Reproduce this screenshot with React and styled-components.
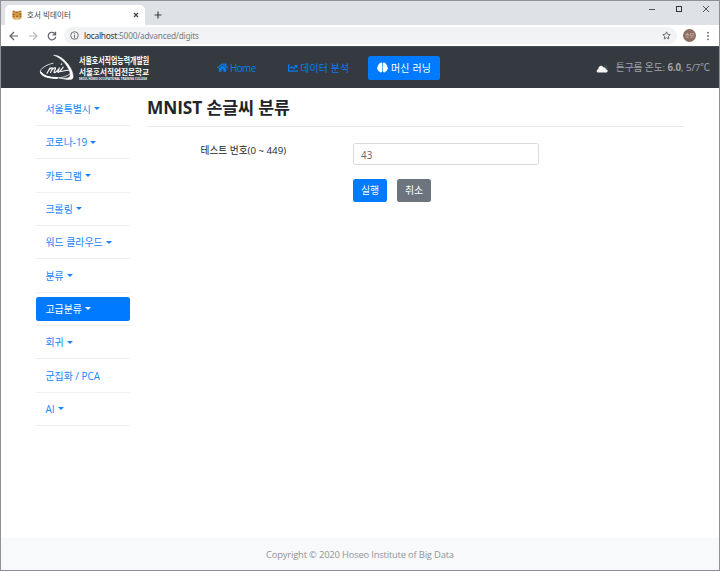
import React from "react";
import styled, { createGlobalStyle, css } from "styled-components";
import { FaHome, FaChartLine, FaBrain } from "react-icons/fa";

const GlobalStyle = createGlobalStyle`
  * { box-sizing: border-box; }
  body {
    margin: 0;
    overflow: hidden;
    font-family: "Open Sans", "Noto Sans CJK KR", sans-serif;
    font-size: 9.9px;
    color: #212529;
  }
`;

const Window = styled.div`
  width: 720px;
  height: 571px;
  display: flex;
  flex-direction: column;
  background: #fff;
  border: 1px solid #8f9195;
  border-bottom-color: #8a8c8f;
`;

const TabBar = styled.div`
  height: 24px;
  flex: none;
  display: flex;
  background: #dee1e6;
  padding-left: 4px;
`;

const Tab = styled.div`
  width: 140px;
  height: 20px;
  margin-top: 4px;
  padding: 0 6px 0 7px;
  display: flex;
  align-items: center;
  background: #fff;
  border-radius: 5px 5px 0 0;
  font-size: 7.5px;
  color: #3c4043;
`;

const TabTitle = styled.span`
  flex: 1;
  margin: -2px 0 0 5px;
  letter-spacing: 0.1px;
  white-space: nowrap;
`;

const NewTab = styled.div`
  width: 26px;
  display: flex;
  align-items: center;
  justify-content: center;
  padding-top: 4px;
`;

const WindowButtons = styled.div`
  margin-left: auto;
  display: flex;
  gap: 19px;
  padding: 4px 9px 0 0;
  height: 12px;
`;

const AddressRow = styled.div`
  height: 21px;
  flex: none;
  display: flex;
  align-items: center;
  padding: 0 9px 0 8px;
  background: #fff;
`;

const BrowserButtons = styled.div`
  width: 55px;
  display: flex;
  gap: 9px;
`;

const AddressBar = styled.div`
  height: 17px;
  flex: 1;
  display: flex;
  align-items: center;
  padding: 0 6px;
  margin-right: 2px;
  border-radius: 9px;
  background: #f1f3f4;
  font-family: "Noto Sans", sans-serif;
  font-size: 8.3px;
  letter-spacing: -0.22px;
  color: #777b7f;
`;

const Url = styled.span`
  flex: 1;
  margin-left: 5px;
`;

const Host = styled.span`
  color: #303336;
`;

const Avatar = styled.div`
  width: 13px;
  height: 13px;
  margin: 0 10px 0 4px;
  border-radius: 50%;
  background: #8d6e63;
  color: #e8dcd8;
  display: flex;
  align-items: center;
  justify-content: center;
  font-size: 5px;
  line-height: 1;
`;

const NavBar = styled.nav`
  height: 42px;
  flex: none;
  display: flex;
  align-items: center;
  padding: 0 9px 0 38px;
  background: #343a40;
  border-top: 1px solid #4b5055;
`;

const Brand = styled.div`
  width: 168.5px;
  display: flex;
  align-items: center;
  gap: 4px;
  color: #fff;
`;

const BrandText = styled.div`
  width: 72px;
  height: 27px;
  margin-top: 2px;
  display: grid;
  grid-template-rows: 11.5px 9.5px 6px;
  white-space: nowrap;
  font-weight: 700;
`;

const BrandLine = styled.span`
  width: max-content;
  height: ${(p) => p.$height}px;
  font-size: ${(p) => p.$size}px;
  line-height: ${(p) => p.$height}px;
  transform: scaleX(${(p) => p.$condense});
  transform-origin: left;
`;

const NavLink = styled.a`
  height: 24px;
  display: flex;
  align-items: center;
  gap: 2.5px;
  padding: 0 9px;
  margin-right: ${(p) => p.$after || 0}px;
  border-radius: 2.5px;
  white-space: nowrap;
  letter-spacing: ${(p) => p.$spacing || 0}px;
  color: ${(p) => (p.$active ? "#fff" : "#087af4")};
  background: ${(p) => (p.$active ? "#007bff" : "transparent")};
`;

const Weather = styled.div`
  margin-left: auto;
  display: flex;
  align-items: center;
  gap: 6.5px;
  color: #a0a3a6;
  white-space: nowrap;
  font-size: 9.8px;
  letter-spacing: -0.13px;
`;

const WeatherText = styled.span`
  margin-top: -2px;
`;

const Body = styled.div`
  flex: 1;
  display: flex;
  padding: 0 35px;
`;

const Sidebar = styled.ul`
  width: 94px;
  margin: 4.6px 17px 0 0;
  padding: 0;
  list-style: none;
`;

const SideItem = styled.li`
  height: 33.33px;
  padding: 4.7px 0;
  border-bottom: 1px solid #efefef;
`;

const SideLink = styled.a`
  height: 23.3px;
  display: flex;
  align-items: center;
  gap: 3px;
  padding-left: 9.5px;
  border-radius: 2.5px;
  white-space: nowrap;
  ${(p) =>
    p.$active
      ? css`
          background: #007bff;
          color: #fff;
        `
      : css`
          color: #1684fb;
        `}
`;

const Caret = styled.i`
  border: 3px solid transparent;
  border-top-color: currentColor;
  border-bottom: 0;
`;

const Content = styled.main`
  flex: 1;
`;

const Title = styled.h3`
  height: 39px;
  margin: 0;
  border-bottom: 1px solid #e8e8e8;
  font-size: 17.3px;
  font-weight: 700;
  letter-spacing: -0.1px;
  line-height: 39px;
  white-space: nowrap;
`;

const Form = styled.form`
  display: grid;
  grid-template-columns: 152.5px 186px;
  row-gap: 14px;
  padding: 16px 0 0 53.5px;
`;

const Label = styled.label`
  padding-top: 1px;
  line-height: 14px;
  font-size: 9.7px;
  white-space: nowrap;
`;

const Input = styled.input`
  width: 186px;
  height: 22.3px;
  padding: 1px 7px 0;
  border: 1px solid #d8dce0;
  border-radius: 2.5px;
  outline: none;
  color: #5f666d;
  font: inherit;
`;

const Actions = styled.div`
  grid-column: 2;
  display: flex;
  gap: 10px;
`;

const Button = styled.button`
  width: 34px;
  height: 22.3px;
  padding: 0;
  border: 0;
  border-radius: 2.5px;
  color: #fff;
  font: inherit;
  background: ${(p) => (p.$primary ? "#007bff" : "#6c757d")};
`;

const Footer = styled.footer`
  height: 32px;
  flex: none;
  display: flex;
  align-items: center;
  justify-content: center;
  background: #f8f9fa;
  color: #919497;
  font-size: 9.4px;
  letter-spacing: -0.18px;
`;

const Stroke = ({ w, h, d, color = "#5f6368", width = 1.2, children }) => (
  <svg width={w} height={h} viewBox={`0 0 ${w} ${h}`} fill="none" stroke={color} strokeWidth={width}>
    {d && <path d={d} />}
    {children}
  </svg>
);

const TigerIcon = () => (
  <svg width="10" height="10" viewBox="0 0 10 10">
    <path d="M.8 1h2l1 .5h2.4L7.2 1h2l.4 2-.2 5.2-1.9 1.3h-5L.6 8.2.4 3z" fill="#df9b43" />
    <path d="M.8 1.2h1.7M7.5 1.2h1.7M3.7 2.2h2.6M.6 4.2h2.2M7.2 4.2h2.2M.6 6.2h1.7M7.7 6.2h1.7M4 6.2h2" stroke="#7a5630" />
    <path d="M3 7.5h4v1.3H3z" fill="#ecc58d" />
  </svg>
);

const SchoolLogo = () => (
  <svg width="36" height="28" viewBox="0 0 36 28" fill="none" stroke="#fff" strokeLinecap="round" strokeLinejoin="round">
    <path d="M15 1.3C23 .5 35.3 15 34 23.7C33.3 26.8 26 25.5 20 23.8C27 25 31.3 24.3 31.3 21C31 13 22.5 4 15 1.3Z" fill="#fff" strokeWidth=".5" />
    <path d="M14 9.3C7 10.5 1 15 1.3 18C1.8 21.5 10 23.8 17 24C23 24 28 22.3 31 20" strokeWidth=".8" />
    <path d="M1.8 18.5C4 22 11 24 18 24" strokeWidth="1.8" />
    <path d="M8 19.3L11 14M10 16C12 13.5 14 13 13.3 14.8L11.5 18.5M13 16C15 13.3 17 13 16.4 14.8L15 18C15 19.7 18 17.5 20.4 14L18.8 18C19.5 19.4 22 16 24.2 13.2M22.8 9.8L22.3 10.5M20.3 17.5C24 18 26.5 15.8 29.3 16.3" strokeWidth="1.1" />
  </svg>
);

const CloudIcon = () => (
  <svg width="13" height="10" viewBox="0 0 13 10">
    <path d="M7 2.6C9 1.1 11.4 2 11.2 4.2C13 5 12.4 7.4 11 7.5z" fill="#43484d" />
    <path d="M2 9.4C.2 9.2.2 6.7 2.2 6.2C2.4 3 5.8 1.4 7.4 4.4C8.8 4.2 9.7 5.2 9.8 6.2C12 6.5 12.2 9.2 10.5 9.4z" fill="#f5f5f5" />
  </svg>
);

const sideItems = [
  "서울특별시", "코로나-19", "카토그램", "크롤링", "워드 클라우드",
  "분류", "고급분류", "회귀", "군집화 / PCA", "AI",
];

export default function App() {
  return (
    <>
      <GlobalStyle />
      <Window>
        <TabBar>
          <Tab>
            <TigerIcon />
            <TabTitle>호서 빅데이터</TabTitle>
            <Stroke w={6} h={6} d="M1 1l4 4M5 1L1 5" color="#3c4043" width={1.1} />
          </Tab>
          <NewTab>
            <Stroke w={8} h={8} d="M4 .5v7M.5 4h7" color="#3c4043" />
          </NewTab>
          <WindowButtons>
            <Stroke w={8} h={8} d="M1 4.5h6" color="#555" width={1} />
            <Stroke w={8} h={8} color="#333" width={1}><rect x="1.5" y="1.5" width="5" height="5" /></Stroke>
            <Stroke w={8} h={8} d="M1 1l6 6M7 1L1 7" color="#444" width={0.9} />
          </WindowButtons>
        </TabBar>
        <AddressRow>
          <BrowserButtons>
            <Stroke w={10} h={10} d="M9 5H1.2M5 1L1 5l4 4" />
            <Stroke w={10} h={10} d="M1 5h7.8M5 1l4 4-4 4" color="#b8babd" />
            <Stroke w={10} h={10} d="M8.2 3A3.8 3.8 0 1 0 8.7 6M8.6.8v3H5.5" />
          </BrowserButtons>
          <AddressBar>
            <Stroke w={9} h={9} width={0.9}><circle cx="4.5" cy="4.5" r="3.8" /><path d="M4.5 4v3M4.5 2.2v1" /></Stroke>
            <Url><Host>localhost</Host>:5000/advanced/digits</Url>
            <Stroke w={9} h={9} width={0.9} d="M4.5 .9l1.1 2.4 2.6.3-1.9 1.8.5 2.6-2.3-1.3L2.2 8l.5-2.6L.8 3.6l2.6-.3z" />
          </AddressBar>
          <Avatar>승모</Avatar>
          <svg width="4" height="10" viewBox="0 0 4 10" fill="#5f6368">
            <circle cx="2" cy="1.7" r=".9" /><circle cx="2" cy="5" r=".9" /><circle cx="2" cy="8.3" r=".9" />
          </svg>
        </AddressRow>
        <NavBar>
          <Brand>
            <SchoolLogo />
            <BrandText>
              <BrandLine $size={9.2} $height={11.5} $condense={0.755}>서울호서직업능력개발원</BrandLine>
              <BrandLine $size={8} $height={9.5} $condense={0.95}>서울호서직업전문학교</BrandLine>
              <BrandLine $size={4} $height={6} $condense={0.68}>SEOUL HOSEO OCCUPATIONAL TRAINING COLLEGE</BrandLine>
            </BrandText>
          </Brand>
          <NavLink $spacing={-0.55} $after={14}><FaHome size={11} />Home</NavLink>
          <NavLink $spacing={0.2} $after={10}><FaChartLine size={10} />데이터 분석</NavLink>
          <NavLink $active $spacing={0.25}><FaBrain size={11} />머신 러닝</NavLink>
          <Weather>
            <CloudIcon />
            <WeatherText>튼구름 온도: <b>6.0</b>, 5/7℃</WeatherText>
          </Weather>
        </NavBar>
        <Body>
          <Sidebar>
            {sideItems.map((label) => (
              <SideItem key={label}>
                <SideLink $active={label === "고급분류"}>
                  {label}
                  {label !== "군집화 / PCA" && <Caret />}
                </SideLink>
              </SideItem>
            ))}
          </Sidebar>
          <Content>
            <Title>MNIST 손글씨 분류</Title>
            <Form>
              <Label htmlFor="number">테스트 번호(0 ~ 449)</Label>
              <Input id="number" defaultValue="43" />
              <Actions>
                <Button type="button" $primary>실행</Button>
                <Button type="button">취소</Button>
              </Actions>
            </Form>
          </Content>
        </Body>
        <Footer>Copyright © 2020 Hoseo Institute of Big Data</Footer>
      </Window>
    </>
  );
}
